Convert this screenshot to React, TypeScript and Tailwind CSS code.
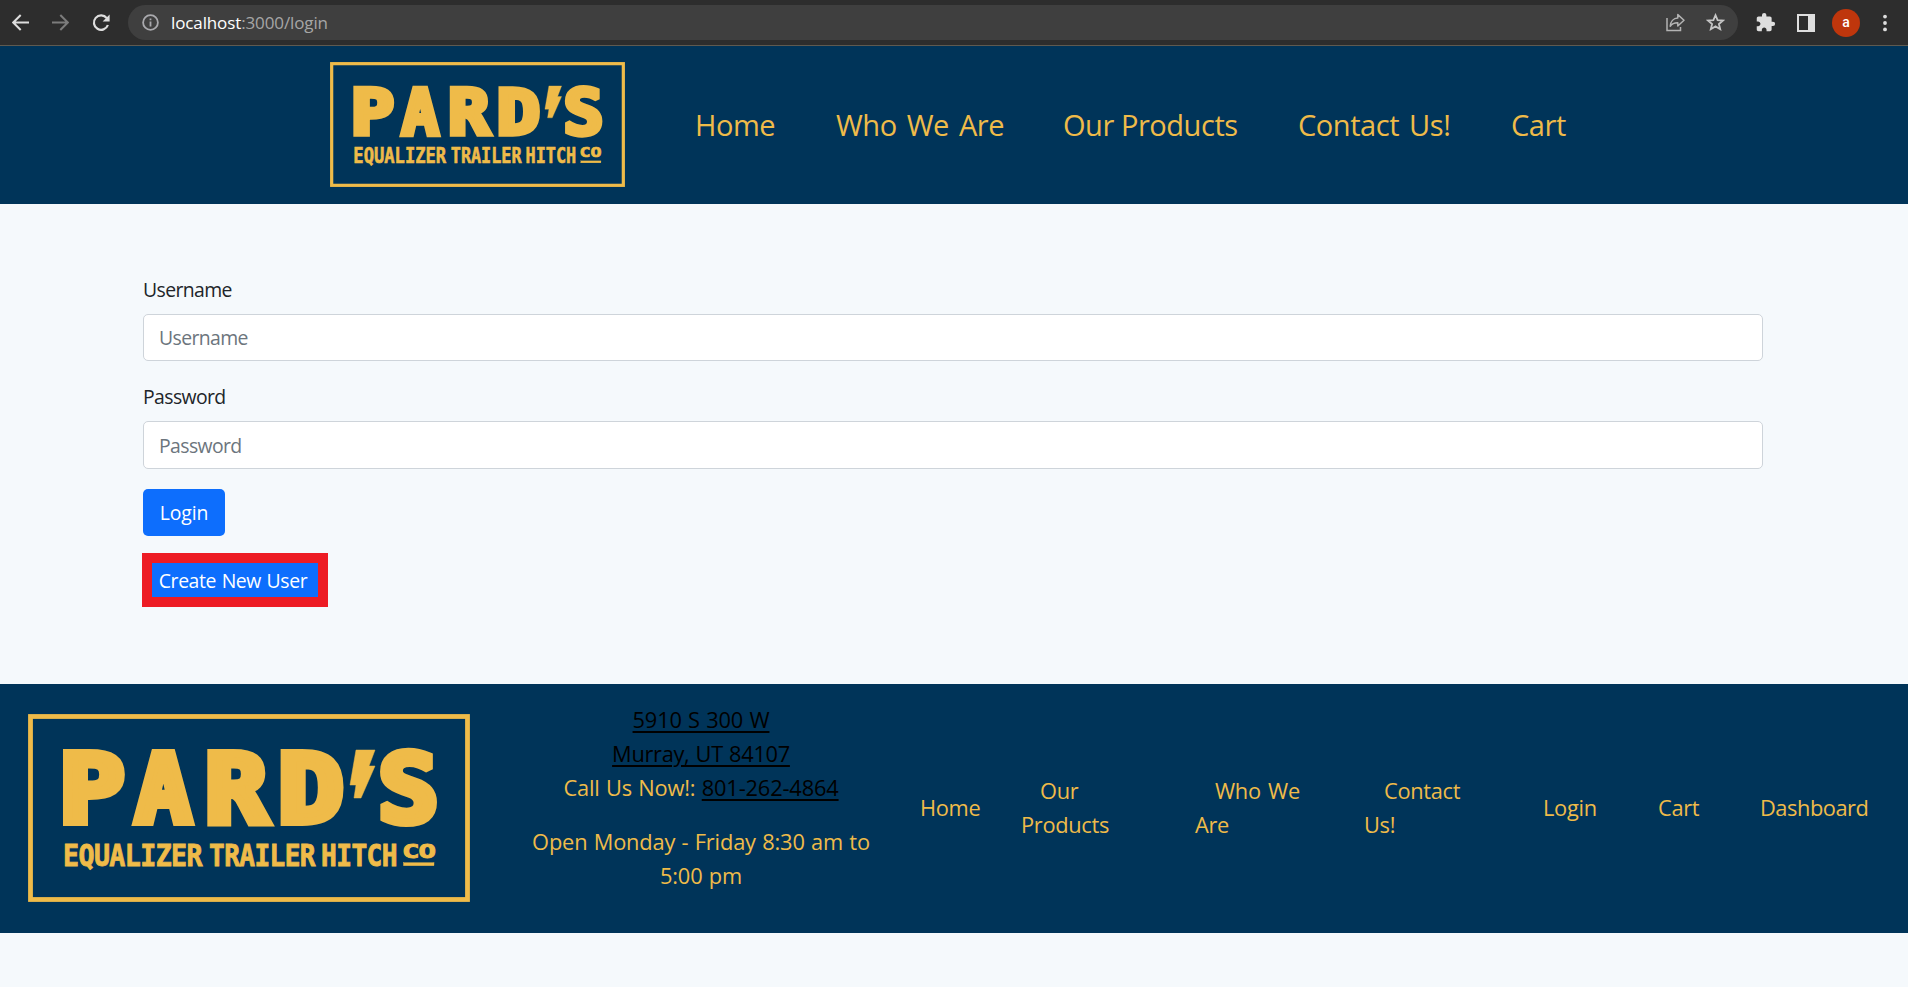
import React from "react";

const LETTERS = [
  { ch: "P", x: 31, w: 65 },
  { ch: "A", x: 107, w: 56 },
  { ch: "R", x: 177, w: 62 },
  { ch: "D", x: 250, w: 65 },
  { ch: "S", x: 350, w: 60 },
];

const WORDS = [
  { word: "EQUALIZER", x: 35, w: 139 },
  { word: "TRAILER", x: 181, w: 106 },
  { word: "HITCH", x: 293, w: 76 },
];

function Logo({ className }: { className: string }) {
  return (
    <svg
      viewBox="0 0 442 188"
      preserveAspectRatio="none"
      className={className}
      fill="#efbb49"
      stroke="#efbb49"
      fontFamily="'DejaVu Sans Mono', monospace"
      fontWeight="700"
    >
      <rect x="2.5" y="2.5" width="437" height="183" fill="none" strokeWidth="4.8" />
      {LETTERS.map((l) => (
        <text key={l.ch} x={l.x} y="108" fontSize="94" strokeWidth="8" strokeMiterlimit="2" textLength={l.w} lengthAdjust="spacingAndGlyphs">
          {l.ch}
        </text>
      ))}
      <polygon points="328,36 347,36 341,52 347,52 333,84 326,84 328,71 322,71" strokeWidth="0.5" />
      {WORDS.map((w) => (
        <text key={w.word} x={w.x} y="151.5" fontSize="31" strokeWidth="0.9" textLength={w.w} lengthAdjust="spacingAndGlyphs">
          {w.word}
        </text>
      ))}
      <text x="374" y="143.5" fontSize="20" strokeWidth="0.9" textLength="33" lengthAdjust="spacingAndGlyphs">
        CO
      </text>
      <rect x="375.5" y="148.7" width="30.5" height="3" strokeWidth="0.4" />
    </svg>
  );
}

function BrowserBar() {
  return (
    <div className="flex h-[46px] items-start border-b border-[#5f5a50] bg-[#2d2d2d] pt-[5px]">
      <div className="flex h-[35px] w-[128px] items-center pl-3">
        <svg width="17" height="17" viewBox="0 0 17 17" fill="none" stroke="#dedede" strokeWidth="2">
          <path d="M17 8.5H1.5M8.7 1L1.2 8.5L8.7 16" />
        </svg>
        <svg className="ml-[23px]" width="17" height="17" viewBox="0 0 17 17" fill="none" stroke="#7c7c7c" strokeWidth="2">
          <path d="M0 8.5H15.5M8.3 1L15.8 8.5L8.3 16" />
        </svg>
        <svg className="ml-[23px]" width="18" height="18" viewBox="0 0 18 18" fill="none" stroke="#dedede" strokeWidth="2.2">
          <path d="M14.8 4.2A7.2 7.2 0 1 0 15.9 11" />
          <path d="M17.6 0.6V7.6H10.6Z" fill="#dedede" stroke="none" />
        </svg>
      </div>
      <div className="flex h-[35px] w-[1610px] items-center rounded-full bg-[#3f3f3f] pr-[13px] pl-[14px]">
        <svg width="17" height="17" viewBox="0 0 17 17" fill="none" stroke="#a9a9ad" strokeWidth="1.8">
          <circle cx="8.5" cy="8.5" r="7.4" />
          <path d="M8.5 7.6V12.4M8.5 4.4V6.2" />
        </svg>
        <div className="ml-3 flex-1 text-[17px] leading-[35px] tracking-[-0.12px] text-[#a6a6a6]">
          <span className="text-white">localhost</span>:3000/login
        </div>
        <svg width="19" height="19" viewBox="0 0 19 19" fill="none" stroke="#b4b4b4" strokeWidth="1.5">
          <path d="M1 5V17.5H14.5V14" />
          <path d="M4.2 13.2C4.5 8.5 7.5 5.2 11.8 5V1.6L18 7.3L11.8 13V9.8C8.5 9.7 6 10.8 4.2 13.2Z" strokeLinejoin="round" />
        </svg>
        <svg className="ml-[21px]" width="19" height="19" viewBox="0 0 19 19" fill="none" stroke="#c6c6c6" strokeWidth="1.8">
          <path d="M9.5 2.2L11.6 7.1L17 7.5L12.9 11L14.2 16.2L9.5 13.4L4.8 16.2L6.1 11L2 7.5L7.4 7.1Z" />
        </svg>
      </div>
      <div className="flex h-[35px] flex-1 items-center pl-[17px]">
        <svg width="21" height="21" viewBox="0 0 24 24" fill="#dedede">
          <path d="M20.5 11H19V7c0-1.1-.9-2-2-2h-4V3.5a2.5 2.5 0 0 0-5 0V5H4c-1.1 0-1.99.9-1.99 2v3.8H3.5c1.49 0 2.7 1.21 2.7 2.7s-1.21 2.7-2.7 2.7H2V20c0 1.1.9 2 2 2h3.8v-1.5c0-1.49 1.21-2.7 2.7-2.7s2.7 1.21 2.7 2.7V22H17c1.1 0 2-.9 2-2v-4h1.500a2.5 2.5 0 0 0 0-5z" />
        </svg>
        <div className="ml-[21px] h-[18px] w-[18px] border-2 border-r-[7px] border-[#dedede]" />
        <div className="ml-[17px] flex h-7 w-7 items-center justify-center rounded-full bg-[#bf360c] font-[Roboto] text-[14px] font-medium text-white">
          a
        </div>
        <svg className="ml-[22px]" width="6" height="18" viewBox="0 0 6 18" fill="#dedede">
          <circle cx="3" cy="2.600" r="1.9" />
          <circle cx="3" cy="9" r="1.9" />
          <circle cx="3" cy="15.400" r="1.9" />
        </svg>
      </div>
    </div>
  );
}

function Field({ label, type, inputClass }: { label: string; type: string; inputClass: string }) {
  return (
    <div className="flex h-[107px] flex-col">
      <label className="mb-[9px] h-[30px] leading-[30px] text-[#212529]">{label}</label>
      <input
        type={type}
        placeholder={label}
        className={`w-full rounded-[5px] border border-[#ced4da] bg-white px-[15px] text-[#212529] placeholder:text-[#6c757d] ${inputClass}`}
      />
    </div>
  );
}

export default function App() {
  return (
    <div className="min-h-[987px] w-[1908px] overflow-hidden bg-[#f5f9fc] font-['Open_Sans','Noto_Sans',sans-serif]">
      <BrowserBar />
      <header className="flex h-[158px] bg-[#003459] pt-4 pl-[330px]">
        <Logo className="h-[125px] w-[295px]" />
        <nav className="flex pt-10 pl-[70px] text-[29px] leading-[45px] tracking-[-0.45px] whitespace-nowrap text-[#efbb49] [word-spacing:1.5px]">
          <a className="w-[141px]">Home</a>
          <a className="w-[227px] [word-spacing:3px]">Who We Are</a>
          <a className="w-[235px] [word-spacing:0px]">Our Products</a>
          <a className="w-[213px] [word-spacing:3px]">Contact Us!</a>
          <a>Cart</a>
        </nav>
      </header>

      <main className="flex h-[480px] w-[1763px] flex-col items-stretch pt-[71px] pl-[143px] text-[19.4px] tracking-[-0.6px]">
        <Field label="Username" type="text" inputClass="h-[47px]" />
        <Field label="Password" type="password" inputClass="h-12 pt-px" />
        <button className="h-[47px] w-[82px] rounded-[5px] bg-[#0d6efd] tracking-[-0.1px] text-white">Login</button>
        <button className="mt-[17px] -ml-px h-[54px] w-[186px] border-[10px] border-[#ed1c24] bg-[#0d6efd] pt-0.5 pr-1 tracking-[-0.4px] whitespace-nowrap text-white [word-spacing:1px]">
          Create New User
        </button>
      </main>

      <footer className="flex h-[249px] bg-[#003459] pl-7 text-[21.8px] leading-[33.75px] tracking-[-0.68px] whitespace-nowrap text-[#efbb49]">
        <Logo className="mt-[30px] h-[188px] w-[442px]" />
        <div className="ml-[51px] w-[360px] pt-[19px] text-center tracking-[-0.15px] [word-spacing:0.8px]">
          <p className="text-black underline decoration-2 underline-offset-[3px]">5910 S 300 W</p>
          <p className="tracking-[-0.3px] text-black underline decoration-2 underline-offset-[3px]">Murray, UT 84107</p>
          <p>
            Call Us Now!: <a className="text-black underline decoration-2 underline-offset-[3px]">801-262-4864</a>
          </p>
          <p className="mt-[21px]">
            Open Monday - Friday 8:30 am to
            <br />
            5:00 pm
          </p>
        </div>
        <nav className="flex items-center pb-0.5 pl-[39px] tracking-[-0.3px] [word-spacing:2px]">
          <a className="w-[101px]">Home</a>
          <a className="w-[174px] indent-[19px]">Our<br />Products</a>
          <a className="w-[169px] indent-5">Who We<br />Are</a>
          <a className="w-[179px] indent-5">Contact<br />Us!</a>
          <a className="w-[115px]">Login</a>
          <a className="w-[102px]">Cart</a>
          <a className="tracking-[-0.45px]">Dashboard</a>
        </nav>
      </footer>
    </div>
  );
}
